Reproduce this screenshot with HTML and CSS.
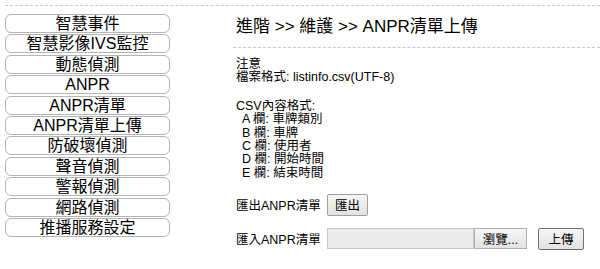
FILE: index.html
```html
<!DOCTYPE html>
<html>
<head>
    <link rel="stylesheet" href="styles.css">
</head>
<body>
    <div class="page">
        <div class="menu">
            <div class="menu-item">智慧事件</div>
            <div class="menu-item">智慧影像IVS監控</div>
            <div class="menu-item">動態偵測</div>
            <div class="menu-item">ANPR</div>
            <div class="menu-item">ANPR清單</div>
            <div class="menu-item">ANPR清單上傳</div>
            <div class="menu-item">防破壞偵測</div>
            <div class="menu-item">聲音偵測</div>
            <div class="menu-item">警報偵測</div>
            <div class="menu-item">網路偵測</div>
            <div class="menu-item">推播服務設定</div>
        </div>
        <div class="content">
            <div class="title">進階 &gt;&gt; 維護 &gt;&gt; ANPR清單上傳</div>
            <div class="info">
                <div>注意</div>
                <div>檔案格式: listinfo.csv(UTF-8)</div>
                <div class="csv-head">CSV內容格式:</div>
                <div class="col">A 欄: 車牌類別</div>
                <div class="col">B 欄: 車牌</div>
                <div class="col">C 欄: 使用者</div>
                <div class="col">D 欄: 開始時間</div>
                <div class="col">E 欄: 結束時間</div>
            </div>
            <div class="row export-row">
                <span class="row-label">匯出ANPR清單</span>
                <button class="btn export-btn">匯出</button>
            </div>
            <div class="row import-row">
                <span class="row-label">匯入ANPR清單</span>
                <div class="file-box"></div>
                <button class="btn browse-btn">瀏覽...</button>
                <button class="btn upload-btn">上傳</button>
            </div>
        </div>
    </div>
</body>
</html>
```
FILE: styles.css
```css
body {
    margin: 0;
    font-family: "Liberation Sans", Arial, "Noto Sans CJK TC", sans-serif;
    color: #000;
    background: #fff;
}

.page {
    display: flex;
    margin: 5px 0 0 5px;
    border-top: 1px dashed #c8c8c8;
}

.menu {
    display: flex;
    flex-direction: column;
    gap: 1.4px;
    width: 165px;
    margin-top: 8px;
}

.menu-item {
    box-sizing: border-box;
    height: 19px;
    border: 1px solid #b4b4b4;
    border-radius: 6px;
    text-align: center;
    font-size: 16px;
    line-height: 17px;
    color: #000;
}

.content {
    flex: 1;
    margin-left: 63px;
}

.title {
    font-size: 17px;
    line-height: 20px;
    padding: 11px 0 10px 3px;
    border-bottom: 1px dashed #c8c8c8;
}

.info {
    padding: 10px 0 0 3px;
    font-size: 12.5px;
    line-height: 13.3px;
}

.csv-head {
    margin-top: 15.6px;
}

.col {
    padding-left: 6px;
}

.row {
    display: flex;
    align-items: center;
    padding-left: 3px;
    font-size: 12.5px;
}

.row-label {
    width: 91px;
}

.export-row {
    margin-top: 14px;
}

.import-row {
    margin-top: 12px;
}

.btn {
    box-sizing: border-box;
    height: 22px;
    padding: 0;
    font-family: inherit;
    font-size: 12.5px;
    background: linear-gradient(#f6f6f6, #e2e2e2);
    border: 1px solid #a0a0a0;
    border-radius: 2px;
    color: #000;
}

.export-btn {
    width: 41px;
}

.file-box {
    box-sizing: border-box;
    width: 147px;
    height: 21px;
    background: #ebebeb;
    border: 1px solid #c8c8c8;
}

.browse-btn {
    width: 53px;
    height: 21px;
    border-radius: 0;
    border-color: #b0b0b0;
}

.upload-btn {
    width: 46px;
    margin-left: 11px;
    border-color: #707070;
}
```
